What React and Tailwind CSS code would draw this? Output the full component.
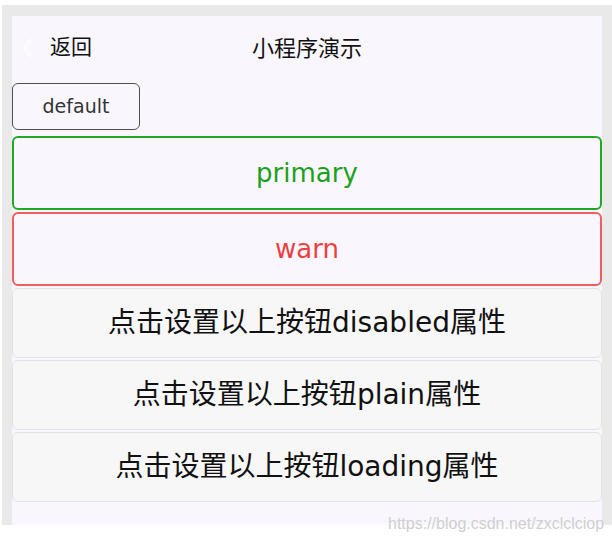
import React from "react";

const latin = { fontFamily: '"DejaVu Sans", "Noto Sans CJK SC", sans-serif' };

function GrayButton({ prop }) {
  return (
    <button className="h-[70px] w-full rounded-[6px] border border-[#e2e2e2] bg-[#f7f7f7] text-[28px] text-[#111]">
      点击设置以上按钮{prop}属性
    </button>
  );
}

export default function App() {
  return (
    <div className="relative h-[544px] w-[612px] overflow-hidden bg-white" style={latin}>
      <div className="ml-[2px] mt-[5px] w-[610px] bg-[#e9e9e9] px-[10px] pt-[11px]">
        <div className="flex h-[509px] flex-col bg-[#f9f7fd]">
          {/* 导航栏 */}
          <div className="relative flex h-[64px] items-center">
            <svg width="12" height="22" viewBox="0 0 12 22" className="ml-[10px]">
              <path d="M10 2 L2 11 L10 20" fill="none" stroke="#ffffff" strokeWidth="2" />
            </svg>
            <span className="ml-[16px] text-[21px] text-[#111]">返回</span>
            <span className="absolute left-1/2 -translate-x-1/2 text-[22px] text-[#111]">
              小程序演示
            </span>
          </div>

          <div className="mt-[3px]">
            <button className="h-[47px] w-[128px] rounded-[6px] border-[1.5px] border-[#505050] text-[19px] text-[#333]">
              default
            </button>
          </div>

          <div className="mt-[6px] flex flex-col gap-[2px]">
            <button className="h-[74px] w-full rounded-[6px] border-2 border-[#22a822] text-[26px] text-[#1ea01e]">
              primary
            </button>
            <button className="h-[74px] w-full rounded-[6px] border-2 border-[#f25e5e] text-[26px] text-[#ee3f3f]">
              warn
            </button>
            <GrayButton prop="disabled" />
            <GrayButton prop="plain" />
            <div className="h-[71px]">
              <GrayButton prop="loading" />
            </div>
          </div>
        </div>
      </div>

      <span
        className="absolute left-[388px] top-[512px] text-[16px] text-[#cfcfcf]"
        style={{ fontFamily: '"Liberation Sans", sans-serif' }}
      >
        https://blog.csdn.net/zxclclciop
      </span>
    </div>
  );
}
